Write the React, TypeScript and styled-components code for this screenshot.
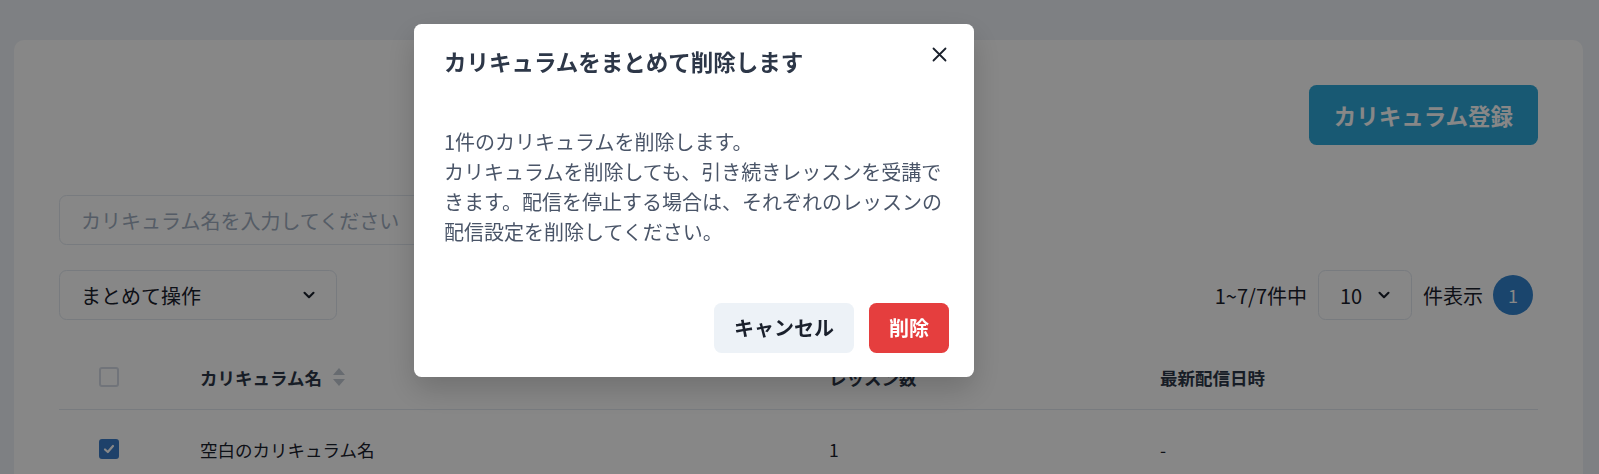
import React from 'react';
import styled, { createGlobalStyle } from 'styled-components';

const GlobalStyle = createGlobalStyle`
  html, body {
    margin: 0;
    padding: 0;
    font-family: 'Noto Sans CJK JP', 'Noto Sans', sans-serif;
    color: #1a202c;
  }
`;

const Page = styled.div`
  height: 474px;
  overflow: hidden;
  background: #eef2f7;
  padding: 40px 16px 0 14px;
  box-sizing: border-box;
`;

const Card = styled.div`
  background: #fff;
  border-radius: 10px;
  padding: 45px;
  min-height: 600px;
  box-sizing: border-box;
`;

const TopBar = styled.div`
  display: flex;
  justify-content: flex-end;
`;

const PrimaryButton = styled.button`
  height: 60px;
  padding: 0 25px;
  border: none;
  border-radius: 7.5px;
  background: #2ea9da;
  color: #fff;
  font-family: inherit;
  font-size: 22.5px;
  font-weight: 700;
  line-height: 1;
`;

const SearchInput = styled.input`
  display: block;
  margin-top: 50px;
  width: 480px;
  height: 50px;
  box-sizing: border-box;
  border: 1px solid #e2e8f0;
  border-radius: 7.5px;
  padding: 0 21px;
  font-family: inherit;
  font-size: 20px;
  color: #1a202c;
  &::placeholder {
    color: #a0aec0;
  }
`;

const ControlRow = styled.div`
  margin-top: 25px;
  display: flex;
  justify-content: space-between;
  align-items: center;
`;

const SelectBox = styled.div<{ $width: number }>`
  width: ${(p) => p.$width}px;
  height: 50px;
  box-sizing: border-box;
  border: 1px solid #e2e8f0;
  border-radius: 7.5px;
  padding: 0 18px 0 21px;
  display: flex;
  align-items: center;
  justify-content: space-between;
  font-size: 20px;
  color: #1a202c;
`;

const Pager = styled.div`
  display: flex;
  align-items: center;
  gap: 11px;
  font-size: 20px;
  color: #1a202c;
  margin-right: 5px;
`;

const PageDot = styled.div`
  width: 40px;
  height: 40px;
  border-radius: 50%;
  background: #3182ce;
  color: #fff;
  display: flex;
  align-items: center;
  justify-content: center;
  font-size: 18px;
  margin-left: -1px;
`;

const Table = styled.div`
  margin-top: 25px;
`;

const Row = styled.div<{ $head?: boolean }>`
  display: grid;
  grid-template-columns: 141px 629px 331px 1fr;
  align-items: center;
  height: ${(p) => (p.$head ? 64 : 78)}px;
  border-bottom: ${(p) => (p.$head ? '1px solid #e2e8f0' : 'none')};
  font-size: 17.5px;
  font-weight: ${(p) => (p.$head ? 700 : 400)};
  color: ${(p) => (p.$head ? '#2d3748' : '#1a202c')};
`;

const Cell = styled.div`
  display: flex;
  align-items: center;
  gap: 10px;
`;

const Check = styled.span<{ $on?: boolean }>`
  margin-left: 40px;
  width: 20px;
  height: 20px;
  box-sizing: border-box;
  border-radius: 3px;
  border: 2px solid ${(p) => (p.$on ? '#3a7bc8' : '#d5dce6')};
  background: ${(p) => (p.$on ? '#3a7bc8' : '#fff')};
  display: flex;
  align-items: center;
  justify-content: center;
`;

const Overlay = styled.div`
  position: fixed;
  inset: 0;
  background: rgba(0, 0, 0, 0.47);
  display: flex;
  align-items: flex-start;
  padding: 24px 0 0 414px;
`;

const Modal = styled.div`
  position: relative;
  width: 560px;
  background: #fff;
  border-radius: 7.5px;
  box-shadow: 0 12px 30px rgba(0, 0, 0, 0.18);
`;

const ModalTitle = styled.h2`
  margin: 0;
  padding: 20px 30px;
  font-size: 22.5px;
  line-height: 34px;
  font-weight: 700;
  color: #2d3748;
`;

const CloseButton = styled.button`
  position: absolute;
  top: 10px;
  right: 15px;
  width: 40px;
  height: 40px;
  border: none;
  background: transparent;
  display: flex;
  align-items: center;
  justify-content: center;
  padding: 0;
`;

const ModalBody = styled.div`
  padding: 29px 30px 36px;
  font-size: 20px;
  line-height: 30px;
  color: #4a5568;
`;

const ModalFooter = styled.div`
  display: flex;
  justify-content: flex-end;
  gap: 15px;
  padding: 20px 25px 24px 30px;
`;

const FooterButton = styled.button<{ $danger?: boolean }>`
  height: 50px;
  padding: 0 20px;
  border: none;
  border-radius: 7.5px;
  background: ${(p) => (p.$danger ? '#e53e3e' : '#edf2f7')};
  color: ${(p) => (p.$danger ? '#fff' : '#1a202c')};
  font-family: inherit;
  font-size: 20px;
  font-weight: 700;
  line-height: 1;
`;

const Chevron = () => (
  <svg width="18" height="18" viewBox="0 0 24 24" fill="none" stroke="#1a202c" strokeWidth="2.8" strokeLinecap="round" strokeLinejoin="round">
    <path d="M6 9l6 6 6-6" />
  </svg>
);

const SortIcon = () => (
  <svg width="14" height="20" viewBox="0 0 14 20">
    <path d="M7 1 L13 8 H1 Z" fill="#c3cad4" />
    <path d="M7 19 L13 12 H1 Z" fill="#c3cad4" />
  </svg>
);

const CheckMark = () => (
  <svg width="12" height="12" viewBox="0 0 12 12" fill="none" stroke="#fff" strokeWidth="2.2" strokeLinecap="round" strokeLinejoin="round">
    <path d="M2 6.5 L4.8 9 L10 3" />
  </svg>
);

const CloseIcon = () => (
  <svg width="15" height="15" viewBox="0 0 15 15" fill="none" stroke="#1a202c" strokeWidth="1.8" strokeLinecap="round">
    <path d="M1.5 1.5 L13.5 13.5 M13.5 1.5 L1.5 13.5" />
  </svg>
);

export default function App() {
  return (
    <>
      <GlobalStyle />
      <Page>
        <Card>
          <TopBar>
            <PrimaryButton>カリキュラム登録</PrimaryButton>
          </TopBar>
          <SearchInput placeholder="カリキュラム名を入力してください" />
          <ControlRow>
            <SelectBox $width={278}>
              まとめて操作
              <Chevron />
            </SelectBox>
            <Pager>
              <span>1~7/7件中</span>
              <SelectBox $width={94}>
                10
                <Chevron />
              </SelectBox>
              <span>件表示</span>
              <PageDot>1</PageDot>
            </Pager>
          </ControlRow>
          <Table>
            <Row $head>
              <Cell>
                <Check />
              </Cell>
              <Cell>
                カリキュラム名
                <SortIcon />
              </Cell>
              <Cell>レッスン数</Cell>
              <Cell>最新配信日時</Cell>
            </Row>
            <Row>
              <Cell>
                <Check $on>
                  <CheckMark />
                </Check>
              </Cell>
              <Cell>空白のカリキュラム名</Cell>
              <Cell>1</Cell>
              <Cell>-</Cell>
            </Row>
          </Table>
        </Card>
      </Page>
      <Overlay>
        <Modal>
          <ModalTitle>カリキュラムをまとめて削除します</ModalTitle>
          <CloseButton aria-label="close">
            <CloseIcon />
          </CloseButton>
          <ModalBody>
            1件のカリキュラムを削除します。
            <br />
            カリキュラムを削除しても、引き続きレッスンを受講できます。配信を停止する場合は、それぞれのレッスンの配信設定を削除してください。
          </ModalBody>
          <ModalFooter>
            <FooterButton>キャンセル</FooterButton>
            <FooterButton $danger>削除</FooterButton>
          </ModalFooter>
        </Modal>
      </Overlay>
    </>
  );
}
